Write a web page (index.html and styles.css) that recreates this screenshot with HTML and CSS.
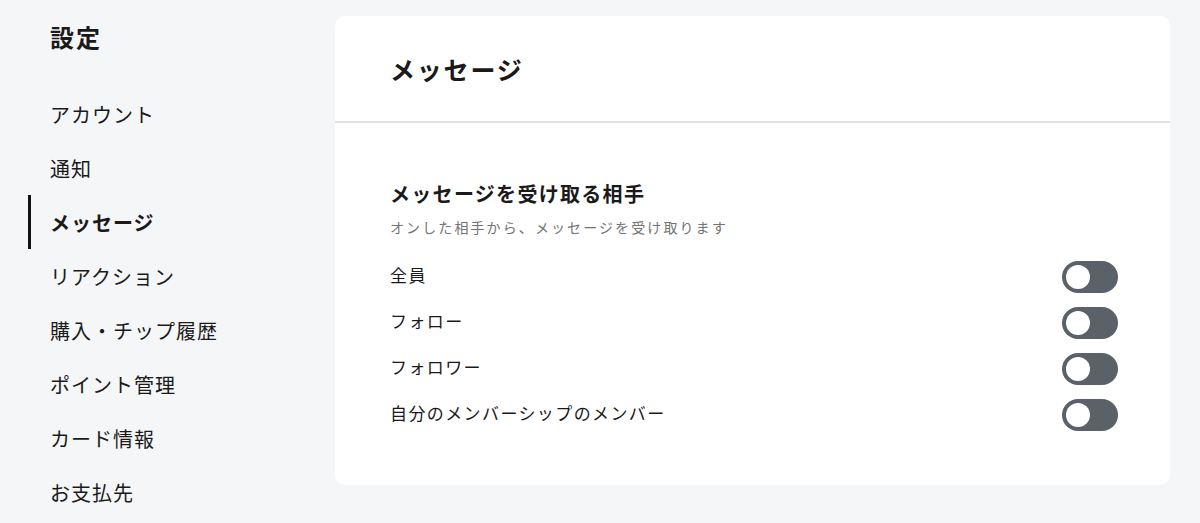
FILE: index.html
```html
<!DOCTYPE html>
<html lang="ja">
<head>
<meta charset="utf-8">
<title>設定</title>
<link rel="stylesheet" href="styles.css">
</head>
<body>
<div class="layout">
  <aside class="sidebar">
    <h1 class="sidebar-title">設定</h1>
    <nav class="nav">
      <a class="nav-item">アカウント</a>
      <a class="nav-item">通知</a>
      <a class="nav-item active">メッセージ</a>
      <a class="nav-item">リアクション</a>
      <a class="nav-item">購入・チップ履歴</a>
      <a class="nav-item">ポイント管理</a>
      <a class="nav-item">カード情報</a>
      <a class="nav-item">お支払先</a>
    </nav>
  </aside>
  <main class="main">
    <section class="card">
      <header class="card-header">
        <h2 class="card-title">メッセージ</h2>
      </header>
      <div class="card-body">
        <h3 class="section-title">メッセージを受け取る相手</h3>
        <p class="section-desc">オンした相手から、メッセージを受け取ります</p>
        <ul class="options">
          <li class="option"><span class="option-label">全員</span><span class="toggle"><span class="knob"></span></span></li>
          <li class="option"><span class="option-label">フォロー</span><span class="toggle"><span class="knob"></span></span></li>
          <li class="option"><span class="option-label">フォロワー</span><span class="toggle"><span class="knob"></span></span></li>
          <li class="option"><span class="option-label">自分のメンバーシップのメンバー</span><span class="toggle"><span class="knob"></span></span></li>
        </ul>
      </div>
    </section>
  </main>
</div>
</body>
</html>
```

FILE: styles.css
```css
* { box-sizing: border-box; }
html, body {
  margin: 0;
  padding: 0;
  background: #f5f6f8;
  font-family: "Noto Sans CJK JP", "Noto Sans", sans-serif;
  color: #1a1a1a;
  overflow: hidden;
}
.layout {
  display: flex;
  width: 1200px;
  height: 523px;
}
.sidebar {
  width: 335px;
  flex: none;
  padding-top: 19px;
}
.sidebar-title {
  margin: 0 0 32px 50px;
  font-size: 24px;
  line-height: 36px;
  font-weight: 700;
  letter-spacing: 2px;
}
.nav {
  display: flex;
  flex-direction: column;
}
.nav-item {
  display: flex;
  align-items: center;
  height: 54px;
  margin-left: 28px;
  padding-left: 19px;
  border-left: 3px solid transparent;
  font-size: 20px;
  letter-spacing: 1px;
  color: #1a1a1a;
}
.nav-item.active {
  border-left-color: #111;
  font-weight: 700;
}
.main {
  flex: 1;
  padding: 16px 30px 0 0;
}
.card {
  background: #fff;
  border-radius: 10px;
}
.card-header {
  height: 107px;
  display: flex;
  align-items: center;
  padding: 0 55px;
  border-bottom: 2px solid #e2e2e2;
}
.card-title {
  margin: 0;
  font-size: 25px;
  font-weight: 700;
  letter-spacing: 1.8px;
}
.card-body {
  padding: 56px 52px 54px 55px;
}
.section-title {
  margin: 0;
  font-size: 20px;
  line-height: 30px;
  font-weight: 700;
  letter-spacing: 1.3px;
}
.section-desc {
  margin: 8px 0 24px;
  font-size: 14px;
  line-height: 20px;
  letter-spacing: 2.1px;
  color: #737373;
}
.options {
  list-style: none;
  margin: 0;
  padding: 0;
  display: flex;
  flex-direction: column;
  gap: 14px;
}
.option {
  display: flex;
  align-items: center;
  justify-content: space-between;
}
.option-label {
  font-size: 17px;
  letter-spacing: 1.4px;
  padding-bottom: 5px;
}
.toggle {
  width: 56px;
  height: 32px;
  border-radius: 16px;
  background: #5a6169;
  display: flex;
  align-items: center;
  padding: 0 4px;
}
.knob {
  width: 24px;
  height: 24px;
  border-radius: 50%;
  background: #fff;
}
```
